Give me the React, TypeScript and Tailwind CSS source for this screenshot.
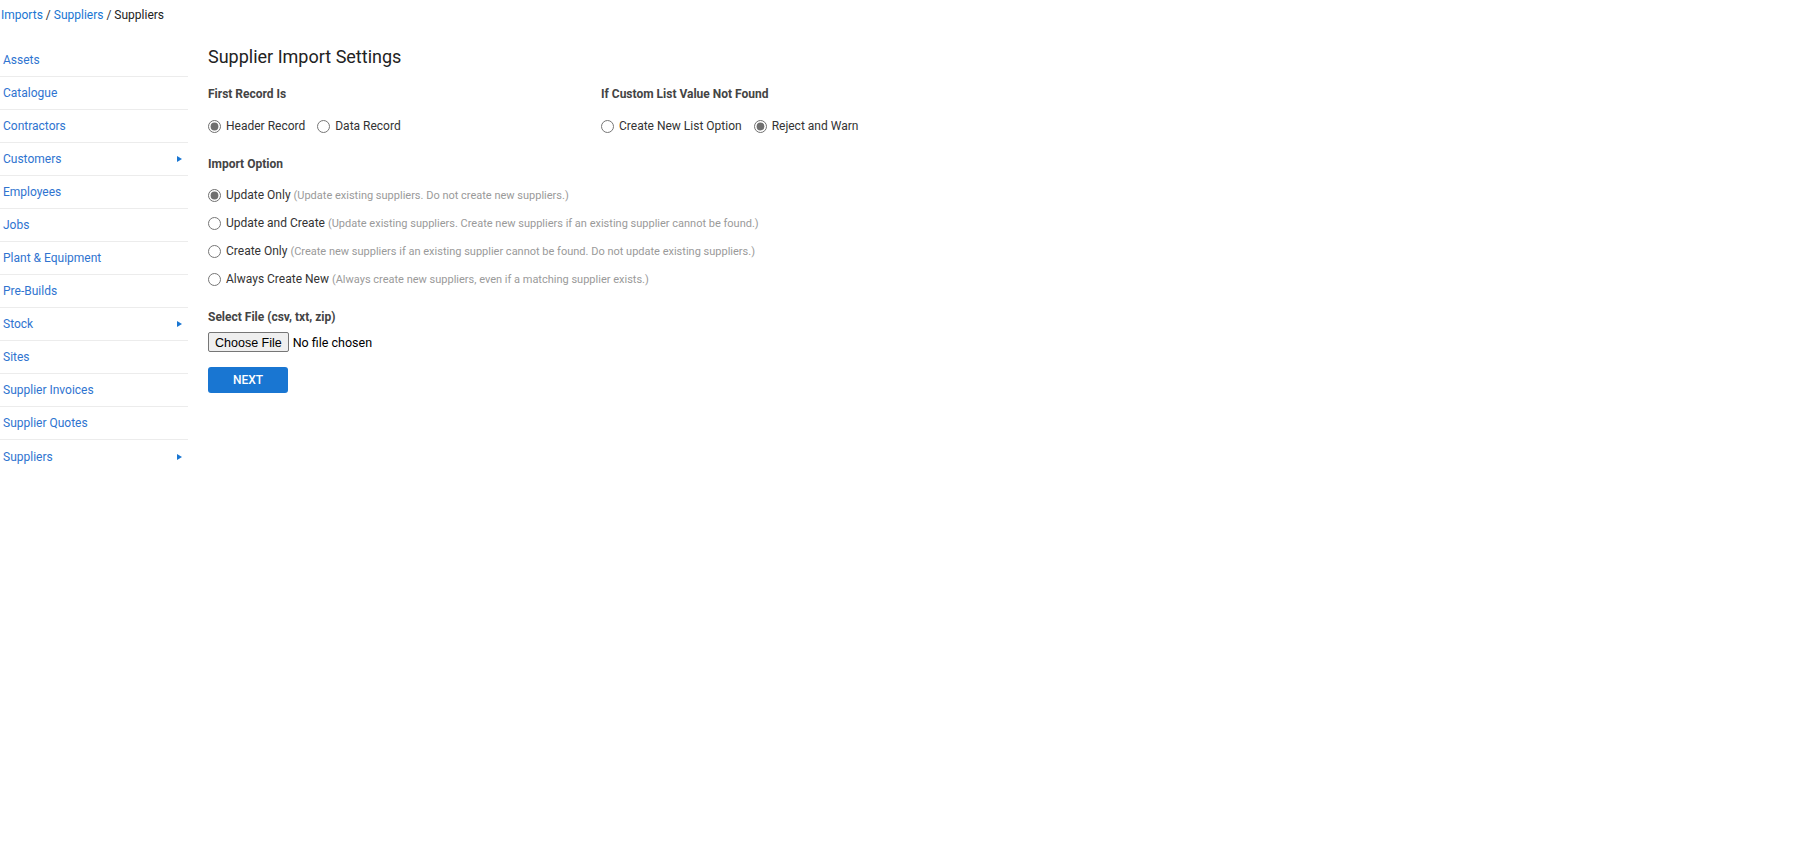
import { useState } from "react"

const menu = [
  { label: "Assets" },
  { label: "Catalogue" },
  { label: "Contractors" },
  { label: "Customers", sub: true },
  { label: "Employees" },
  { label: "Jobs" },
  { label: "Plant & Equipment" },
  { label: "Pre-Builds" },
  { label: "Stock", sub: true },
  { label: "Sites" },
  { label: "Supplier Invoices" },
  { label: "Supplier Quotes" },
  { label: "Suppliers", sub: true },
]

const importOptions = [
  { id: "update", label: "Update Only", note: "(Update existing suppliers. Do not create new suppliers.)" },
  {
    id: "both",
    label: "Update and Create",
    note: "(Update existing suppliers. Create new suppliers if an existing supplier cannot be found.)",
  },
  {
    id: "create",
    label: "Create Only",
    note: "(Create new suppliers if an existing supplier cannot be found. Do not update existing suppliers.)",
  },
  { id: "always", label: "Always Create New", note: "(Always create new suppliers, even if a matching supplier exists.)" },
]

const Radio = ({ name, checked, onChange, children }) => (
  <label className="flex items-center cursor-pointer">
    <input
      type="radio"
      name={name}
      checked={checked}
      onChange={onChange}
      className="m-0 w-[13px] h-[13px] accent-[#6f6f6f]"
    />
    <span className="ml-[5px]">{children}</span>
  </label>
)

export default function App() {
  const [firstRecord, setFirstRecord] = useState("header")
  const [notFound, setNotFound] = useState("reject")
  const [option, setOption] = useState("update")

  return (
    <div className="min-h-screen bg-white font-['Roboto',sans-serif] text-[#333]">
      {/* breadcrumb */}
      <div className="h-[30px] pl-[1px] pt-[6px] text-[12px] leading-[18px]">
        <span className="text-[#1976d2]">Imports</span>
        <span> / </span>
        <span className="text-[#1976d2]">Suppliers</span>
        <span> / </span>
        <span className="text-[#222]">Suppliers</span>
      </div>

      <div className="flex pt-[14px]">
        {/* side menu */}
        <nav className="w-[188px] flex-none">
          {menu.map((item) => (
            <div
              key={item.label}
              className="flex items-center justify-between h-[33px] pl-[3px] pr-[6px] border-b border-[#ececec] last:border-b-0 text-[12px] text-[#2f74d0] cursor-pointer hover:underline"
            >
              <span>{item.label}</span>
              {item.sub && (
                <span className="w-0 h-0 border-y-[3.5px] border-y-transparent border-l-[5px] border-l-[#1976d2]" />
              )}
            </div>
          ))}
        </nav>

        {/* settings */}
        <main className="flex-1 pl-[20px] text-[12px]">
          <h1 className="text-[18px] leading-[24px] font-normal text-[#222] mt-[1px]">
            Supplier Import Settings
          </h1>

          <div className="flex mt-[17px]">
            <div className="w-[393px]">
              <div className="font-bold text-[#444] leading-[16px]">First Record Is</div>
              <div className="flex items-center gap-[12px] mt-[16px] h-[16px]">
                <Radio name="first" checked={firstRecord === "header"} onChange={() => setFirstRecord("header")}>
                  Header Record
                </Radio>
                <Radio name="first" checked={firstRecord === "data"} onChange={() => setFirstRecord("data")}>
                  Data Record
                </Radio>
              </div>
            </div>
            <div>
              <div className="font-bold text-[#444] leading-[16px]">If Custom List Value Not Found</div>
              <div className="flex items-center gap-[12px] mt-[16px] h-[16px]">
                <Radio name="notfound" checked={notFound === "create"} onChange={() => setNotFound("create")}>
                  Create New List Option
                </Radio>
                <Radio name="notfound" checked={notFound === "reject"} onChange={() => setNotFound("reject")}>
                  Reject and Warn
                </Radio>
              </div>
            </div>
          </div>

          <div className="font-bold text-[#444] leading-[16px] mt-[22px]">Import Option</div>
          <div className="flex flex-col gap-[12px] mt-[15px]">
            {importOptions.map((o) => (
              <div key={o.id} className="h-[16px] flex items-center">
                <Radio name="option" checked={option === o.id} onChange={() => setOption(o.id)}>
                  {o.label} <span className="text-[11px] text-[#9a9a9a]">{o.note}</span>
                </Radio>
              </div>
            ))}
          </div>

          <div className="font-bold text-[#444] leading-[16px] mt-[22px]">Select File (csv, txt, zip)</div>
          <input
            type="file"
            accept=".csv,.txt,.zip"
            className="block mt-[7px] text-[12.5px] text-black file:mr-[4px] file:px-[6px] file:py-[1px] file:h-[20px] file:border file:border-[#767676] file:rounded-[2px] file:bg-[#efefef] file:text-black file:font-['Liberation_Sans',Arial,sans-serif] file:text-[12.5px]"
          />

          <button
            type="button"
            className="block mt-[14px] w-[80px] h-[26px] rounded-[3px] bg-[#1976d2] text-white text-[12px] font-medium"
          >
            NEXT
          </button>
        </main>
      </div>
    </div>
  )
}
